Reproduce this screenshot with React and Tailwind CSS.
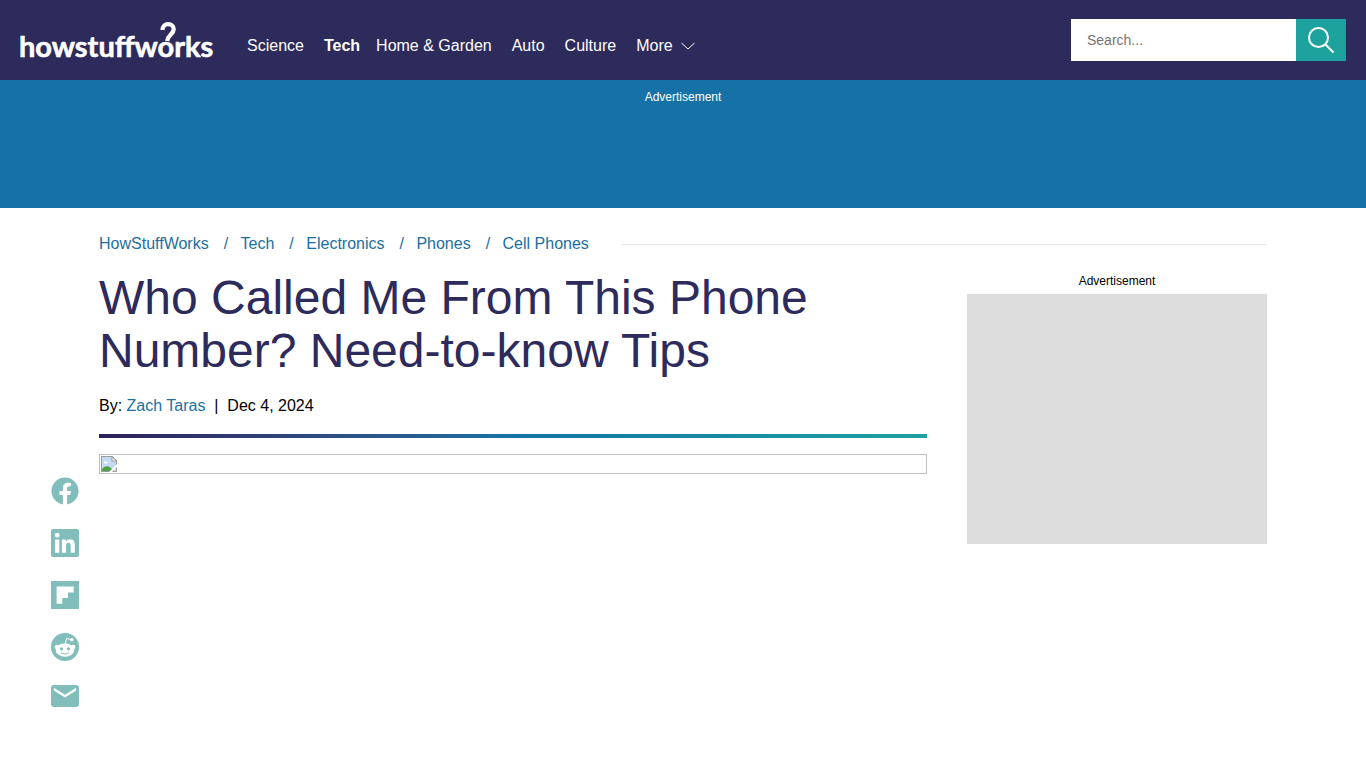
import { useState } from "react";
import { FaFacebook } from "react-icons/fa";

const navLinks = [
  { label: "Science" },
  { label: "Tech", active: true },
  { label: "Home & Garden" },
  { label: "Auto" },
  { label: "Culture" },
];

const crumbs = ["HowStuffWorks", "Tech", "Electronics", "Phones", "Cell Phones"];

function Logo() {
  return (
    <a href="#home" aria-label="HowStuffWorks" className="shrink-0">
      <svg width="195" height="48" viewBox="0 0 195 48" fill="#fff" className="overflow-visible">
        <text x="-1" y="41" fontSize="29" fontWeight="700" fontFamily="Lato, sans-serif" stroke="#fff" strokeWidth=".6">
          howstuffworks
        </text>
        {/* hook that sits on the second "o" */}
        <path
          d="M142.500 14C142.500 10.300 145 8.200 148 8.200C151.500 8.200 153.700 10.300 153.700 13.200C153.700 18 148.200 18.500 147.200 25"
          fill="none"
          stroke="#fff"
          strokeWidth="4.300"
        />
      </svg>
    </a>
  );
}

function LinkedinIcon() {
  return (
    <svg width="28" height="28" viewBox="0 0 24 24" fill="currentColor">
      <path d="M22.225 0H1.771C.792 0 0 .774 0 1.729v20.542C0 23.227.792 24 1.771 24h20.451C23.2 24 24 23.227 24 22.271V1.729C24 .774 23.2 0 22.222 0zM7.119 20.452H3.555V9h3.564zM5.337 7.433a2.062 2.062 0 1 1 0-4.125 2.062 2.062 0 0 1 0 4.125zm15.11 13.019h-3.554v-5.569c0-1.328-.027-3.037-1.852-3.037-1.853 0-2.136 1.445-2.136 2.939v5.667H9.351V9h3.414v1.561h.046c.477-.9 1.637-1.85 3.37-1.85 3.601 0 4.267 2.37 4.267 5.455z" />
    </svg>
  );
}

function FlipboardIcon() {
  return (
    <svg width="28" height="28" viewBox="0 0 28 28" fill="currentColor">
      <path fillRule="evenodd" d="M0 0h28v28H0zM5.600 5.600v17.200h5.700v-5.700h5.700v-5.700h5.700v-5.800z" />
    </svg>
  );
}

function RedditIcon() {
  return (
    <svg width="28" height="28" viewBox="0 0 28 28" fill="currentColor">
      <circle cx="14" cy="14" r="14" />
      <g fill="#fff">
        <ellipse cx="14" cy="17" rx="9.300" ry="6.800" />
        <circle cx="5.800" cy="14" r="2.200" />
        <circle cx="22.200" cy="14" r="2.200" />
        <circle cx="20.800" cy="6.800" r="1.800" />
      </g>
      <path d="M14.300 10.500l1.400-5 4.300 1" fill="none" stroke="#fff" />
      <circle cx="10.500" cy="15.800" r="1.600" />
      <circle cx="17.500" cy="15.800" r="1.600" />
      <path d="M10.300 19.800c2 1.600 5.400 1.600 7.400 0" fill="none" stroke="currentColor" />
    </svg>
  );
}

function MailIcon() {
  return (
    <svg width="28" height="22" viewBox="2 4 20 16" preserveAspectRatio="none" fill="currentColor">
      <path d="M20 4H4c-1.100 0-2 .9-2 2v12c0 1.100.9 2 2 2h16c1.100 0 2-.9 2-2V6c0-1.100-.9-2-2-2zm0 4l-8 5-8-5V6l8 5 8-5z" />
    </svg>
  );
}

const shareLinks = [
  { name: "Facebook", icon: <FaFacebook size={28} /> },
  { name: "LinkedIn", icon: <LinkedinIcon /> },
  { name: "Flipboard", icon: <FlipboardIcon /> },
  { name: "Reddit", icon: <RedditIcon /> },
  { name: "Email", icon: <MailIcon /> },
];

function MissingImage() {
  return (
    <div role="img" aria-label="Article image" className="mt-4 flex h-5 border border-[#c0c0c0] p-px">
      <svg width="16" height="16" viewBox="0 0 16 16">
        <path d="M.5.5h11l4 4v11H.5z" fill="#c6d9f5" stroke="#9a9a9a" />
        <path d="M11 .5v4.500h4.500z" fill="#fff" stroke="#9a9a9a" />
        <path d="M3 6.500c0-1.500 2-2 2.500-.8 1.200-.4 2 1.300.8 1.800H3.500z" fill="#fff" />
        <path d="M1 15v-2c2-3 6-4 9-1l3 3z" fill="#4fa345" />
        <path d="M8 16l8-8v3l-5 5z" fill="#fff" />
      </svg>
    </div>
  );
}

export default function App() {
  const [query, setQuery] = useState("");

  return (
    <div className="min-h-screen bg-white font-['Liberation_Sans',Arial,sans-serif] text-base text-black">
      <header className="flex h-20 items-center bg-[#2d2a5c] px-5 text-white">
        <Logo />
        <nav className="ml-8 flex items-center pt-3">
          {navLinks.map((link) => (
            <a
              key={link.label}
              href="#section"
              className={link.active ? "mr-4 font-bold" : "mr-5"}
            >
              {link.label}
            </a>
          ))}
          <button type="button" className="flex items-center gap-2">
            More
            <svg width="14" height="8" viewBox="0 0 14 8" fill="none" stroke="currentColor">
              <path d="M.5 1L7 7l6.500-6" />
            </svg>
          </button>
        </nav>
        <form className="ml-auto flex h-[42px]" onSubmit={(e) => e.preventDefault()}>
          <input
            type="text"
            aria-label="Search"
            placeholder="Search..."
            className="w-[225px] bg-white px-4 text-sm text-black placeholder:text-[#757575] focus:outline-none"
            value={query}
            onChange={(e) => setQuery(e.target.value)}
          />
          <button type="submit" aria-label="Search" className="flex w-[50px] items-center justify-center bg-[#1ea29e]">
            <svg width="28" height="28" viewBox="0 0 28 28" fill="none" stroke="#fff" strokeWidth="2">
              <circle cx="11.500" cy="11.500" r="9.500" />
              <path d="M18.500 18.500l8 8" />
            </svg>
          </button>
        </form>
      </header>

      <div className="h-32 bg-[#1672a6] pt-2 text-center text-xs leading-[18px] text-white">Advertisement</div>

      <div className="grid grid-cols-[1fr_minmax(0,828px)_340px_1fr] pt-6">
        <nav aria-label="Breadcrumb" className="col-span-2 col-start-2 flex items-center text-[#1b6fa0]">
          <ol className="flex">
            {crumbs.map((crumb, i) => (
              <li key={crumb}>
                {i > 0 && <span className="mr-2 ml-[15px]">/&nbsp;</span>}
                <a href="#crumb">{crumb}</a>
              </li>
            ))}
          </ol>
          <span className="ml-8 h-px flex-1 bg-[#e6e6e6]" />
        </nav>

        <ul className="col-start-1 row-start-2 mt-[221px] flex flex-col items-end gap-6 pr-5 text-[#80bdbb]">
          {shareLinks.map((link) => (
            <li key={link.name}>
              <a href="#share" aria-label={link.name} className="block">
                {link.icon}
              </a>
            </li>
          ))}
        </ul>

        <article className="col-start-2 row-start-2 pt-[15px]">
          <h1 className="text-5xl leading-[53px] text-[#2d2a5c]">Who Called Me From This Phone Number? Need-to-know Tips</h1>
          <p className="mt-[17px]">
            By: <a href="#author" className="text-[#1b6fa0]">Zach Taras</a>&nbsp; |&nbsp; Dec 4, 2024
          </p>
          <div className="mt-4 h-1 bg-linear-to-r from-[#2d2159] via-[#1672a6] to-[#1ea29e]" />
          <MissingImage />
        </article>

        <aside className="col-start-3 row-start-2 ml-10 pt-4">
          <p className="text-center text-xs leading-[18px]">Advertisement</p>
          <div className="mt-1 h-[250px] bg-[#dcdcdc]" />
        </aside>
      </div>
    </div>
  );
}
